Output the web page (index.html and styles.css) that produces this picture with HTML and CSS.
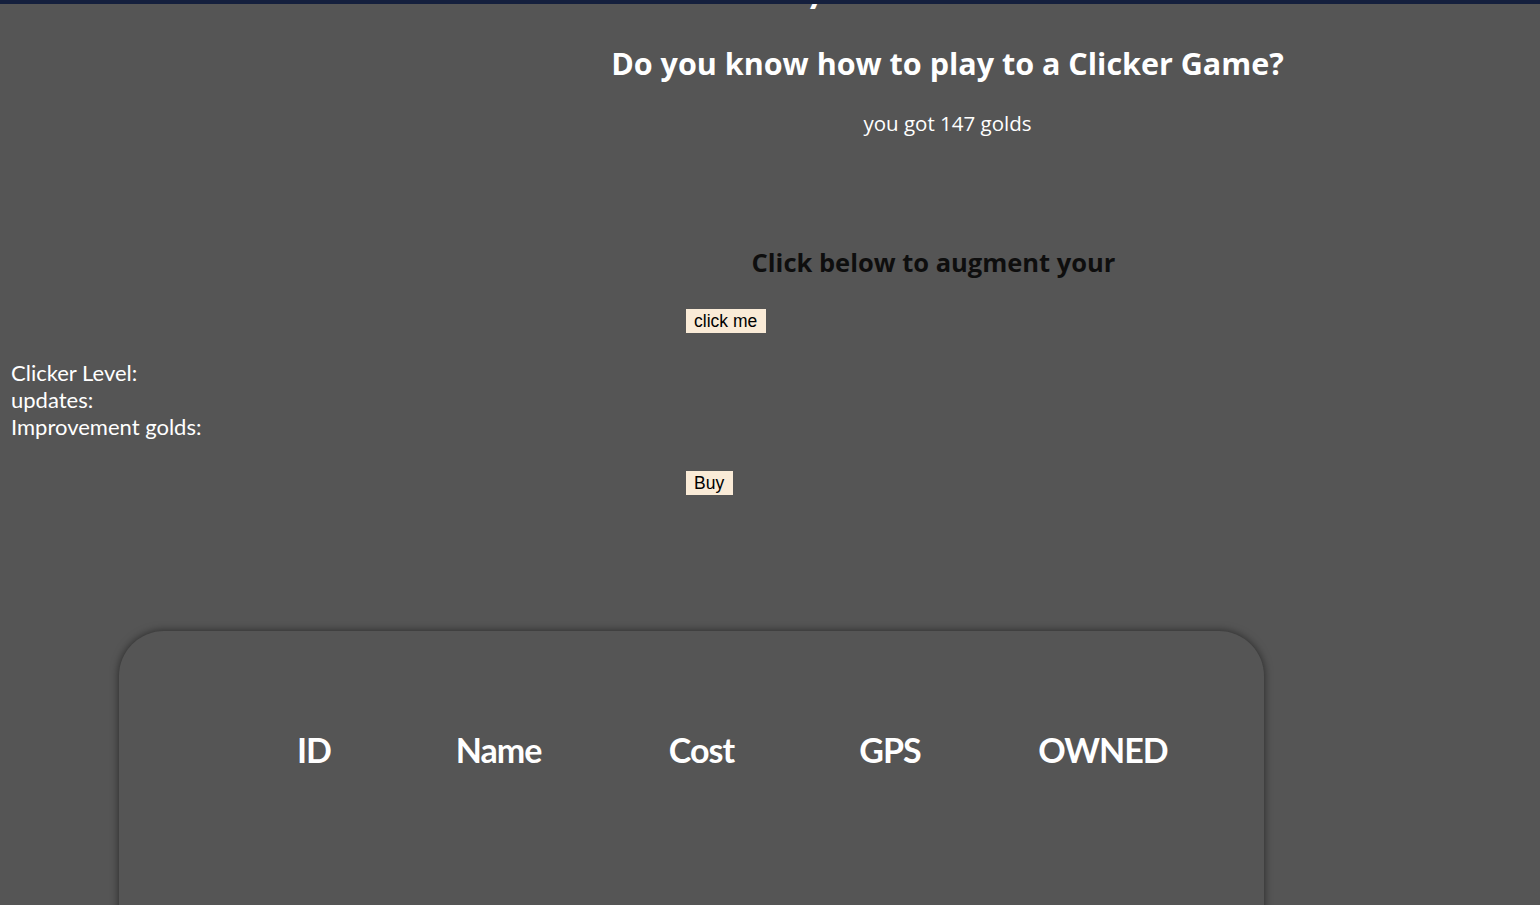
FILE: index.html
```html
<!DOCTYPE html>
<html lang="en">
<head>
<meta charset="utf-8">
<title>Clicker Game</title>
<link rel="stylesheet" href="styles.css">
</head>
<body>
<div class="topbar"></div>
<div class="layout">
  <aside class="stats">
    <div class="stat">Clicker Level:</div>
    <div class="stat">updates:</div>
    <div class="stat">Improvement golds:</div>
  </aside>
  <section class="game">
    <h1 class="title">My Clicker Game</h1>
    <h2 class="question">Do you know how to play to a Clicker Game?</h2>
    <p class="golds">you got 147 golds</p>
    <h3 class="augment">Click below to augment your</h3>
    <div class="actions">
      <button class="btn btn-click">click me</button>
    </div>
    <div class="actions actions-buy">
      <button class="btn">Buy</button>
    </div>
  </section>
</div>
<div class="shop">
  <div class="shop-head">
    <div class="col col-id">ID</div>
    <div class="col col-name">Name</div>
    <div class="col col-cost">Cost</div>
    <div class="col col-gps">GPS</div>
    <div class="col col-owned">OWNED</div>
  </div>
</div>
</body>
</html>
```

FILE: styles.css
```css
html, body {
  margin: 0;
  padding: 0;
}
body {
  background: #555555;
  font-family: "Trebuchet MS", Lato, "Noto Sans", sans-serif;
  color: #ffffff;
  overflow: hidden;
  height: 905px;
}
.topbar {
  position: fixed;
  top: 0;
  left: 0;
  right: 0;
  height: 4px;
  background: #141f3d;
  z-index: 10;
}
.layout {
  display: grid;
  grid-template-columns: 355px 1fr;
}
.stats {
  padding: 359px 0 0 11px;
  font-family: Lato, sans-serif;
  font-size: 22px;
  line-height: 27px;
}
.game {
  text-align: center;
}
.title {
  margin: -36px 0 0;
  padding-right: 56px;
  font-family: Lato, sans-serif;
  font-size: 40px;
  line-height: 46px;
  font-weight: bold;
}
.question {
  margin: 33px 0 0;
  font-family: "Open Sans", sans-serif;
  font-size: 30.5px;
  line-height: 40px;
  font-weight: bold;
}
.golds {
  margin: 27px 0 0;
  font-family: "Open Sans", sans-serif;
  font-size: 20.5px;
  line-height: 26px;
}
.augment {
  margin: 110px 0 0;
  padding-right: 28px;
  font-family: "Open Sans", sans-serif;
  font-size: 25.5px;
  line-height: 32px;
  color: #0e0e0e;
  font-weight: bold;
}
.actions {
  text-align: left;
  padding-left: 331px;
  margin-top: 31px;
  line-height: 0;
}
.actions-buy {
  margin-top: 138px;
}
.btn {
  font-family: "Liberation Sans", Arial, sans-serif;
  font-size: 17.5px;
  line-height: 24px;
  height: 24px;
  padding: 0 9px 0 8px;
  border: none;
  background: #faebd7;
  color: #000;
  margin: 0;
}
.shop {
  margin: 136px 0 0 119px;
  width: 1145px;
  height: 400px;
  border-radius: 45px;
  box-shadow: 0 0 8px rgba(0, 0, 0, 0.55);
  background: #555555;
  box-sizing: border-box;
  padding: 96px 0 0 110px;
}
.shop-head {
  display: flex;
}
.col {
  text-align: center;
  font-family: Lato, sans-serif;
  font-size: 34px;
  line-height: 46px;
  font-weight: bold;
  letter-spacing: -1px;
}
.col-id { width: 170px; }
.col-name { width: 199px; }
.col-cost { width: 207px; }
.col-gps { width: 170px; }
.col-owned { width: 256px; }
```
